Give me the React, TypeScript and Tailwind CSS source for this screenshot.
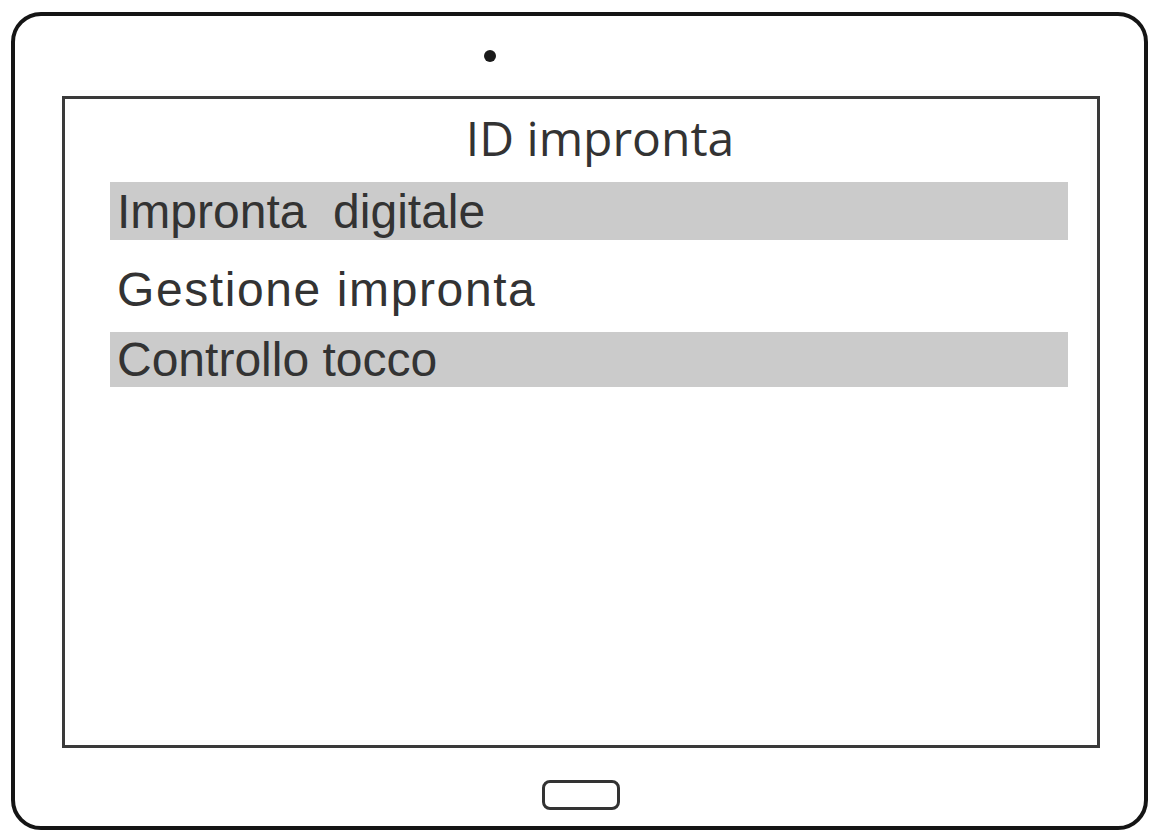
const items = [
  { label: 'Impronta\u00a0 digitale', shaded: true, cls: 'mt-[20px] h-[58px] pt-[3px]' },
  { label: 'Gestione impronta', shaded: false, cls: 'mt-[19px] h-[56px] pt-[4px] tracking-[1.6px]' },
  { label: 'Controllo tocco', shaded: true, cls: 'mt-[17px] h-[55px] pt-[1px]' },
];

export default function App() {
  return (
    <div className="w-[1154px] h-[832px] bg-white pt-[12px] pl-[11px]">
      {/* tablet body */}
      <div className="w-[1137px] h-[818px] border-[4px] border-[#151515] rounded-[30px] flex flex-col">
        {/* camera */}
        <div className="h-[80px] pt-[34px] pl-[469px]">
          <div className="w-[12px] h-[12px] rounded-full bg-[#1a1a1a]" />
        </div>

        {/* screen */}
        <div className="ml-[47px] mr-[44px] h-[652px] border-[3px] border-[#3a3a3a] flex flex-col">
          <h1
            className="mt-[15px] pl-[38px] text-center text-[48px] leading-[48px] text-[#333]"
            style={{ fontFamily: '"Open Sans", sans-serif' }}
          >
            ID impronta
          </h1>
          <ul className="ml-[45px] mr-[29px]">
            {items.map((it) => (
              <li
                key={it.label}
                className={`${it.cls} pl-[7px] text-[48px] leading-[54px] text-[#333] ${it.shaded ? 'bg-[#cbcbcb]' : ''}`}
                style={{ fontFamily: '"Liberation Sans", Arial, sans-serif' }}
              >
                {it.label}
              </li>
            ))}
          </ul>
        </div>

        {/* home button */}
        <div className="mt-[32px] ml-[527px] w-[78px] h-[30px] border-[3px] border-[#333] rounded-[8px]" />
      </div>
    </div>
  );
}
